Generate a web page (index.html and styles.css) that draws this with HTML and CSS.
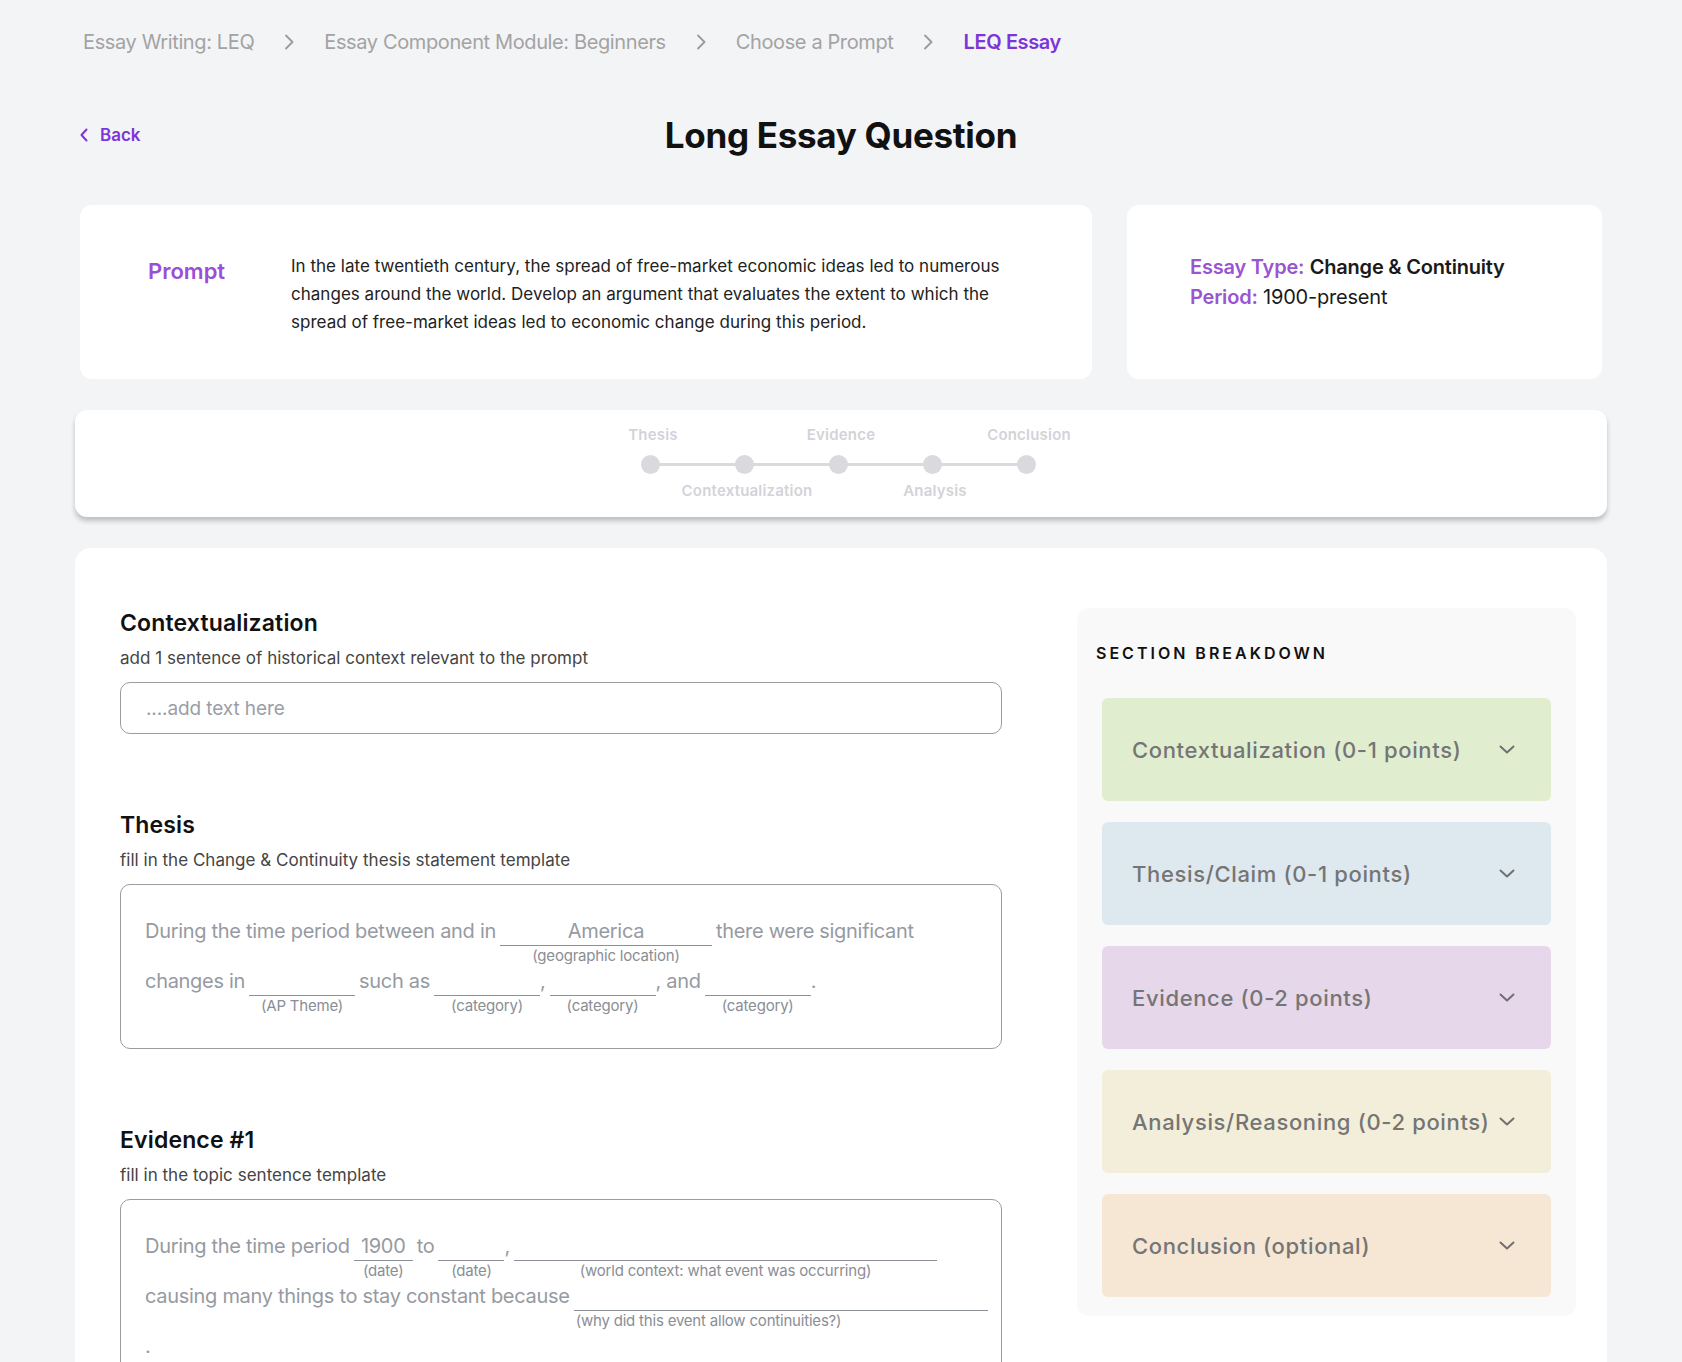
FILE: index.html
```html
<!DOCTYPE html>
<html lang="en">
<head>
<meta charset="utf-8">
<title>LEQ Essay</title>
<link rel="stylesheet" href="styles.css">
</head>
<body>
<nav class="crumbs">
  <span class="crumb">Essay Writing: LEQ</span>
  <svg class="crumb-sep" viewBox="0 0 10 16" width="10" height="16"><path d="M2 1.5 L8.5 8 L2 14.5" fill="none" stroke="#9a9a9a" stroke-width="1.8" stroke-linecap="round" stroke-linejoin="round"/></svg>
  <span class="crumb">Essay Component Module: Beginners</span>
  <svg class="crumb-sep" viewBox="0 0 10 16" width="10" height="16"><path d="M2 1.5 L8.5 8 L2 14.5" fill="none" stroke="#9a9a9a" stroke-width="1.8" stroke-linecap="round" stroke-linejoin="round"/></svg>
  <span class="crumb">Choose a Prompt</span>
  <svg class="crumb-sep" viewBox="0 0 10 16" width="10" height="16"><path d="M2 1.5 L8.5 8 L2 14.5" fill="none" stroke="#9a9a9a" stroke-width="1.8" stroke-linecap="round" stroke-linejoin="round"/></svg>
  <span class="crumb current">LEQ Essay</span>
</nav>

<header class="title-row">
  <a class="back" href="#">
    <svg viewBox="0 0 8 14" width="8" height="14"><path d="M6.5 1.5 L1.5 7 L6.5 12.5" fill="none" stroke="#7d35d9" stroke-width="2" stroke-linecap="round" stroke-linejoin="round"/></svg>
    <span>Back</span>
  </a>
  <h1 class="title">Long Essay Question</h1>
  <div></div>
</header>

<section class="cards">
  <div class="card prompt-card">
    <div class="prompt-label">Prompt</div>
    <p class="prompt-text">In the late twentieth century, the spread of free-market economic ideas led to numerous changes around the world. Develop an argument that evaluates the extent to which the spread of free-market ideas led to economic change during this period.</p>
  </div>
  <div class="card info-card">
    <div class="info-line"><span class="info-key">Essay Type:</span> <span class="info-val strong">Change &amp; Continuity</span></div>
    <div class="info-line"><span class="info-key">Period:</span> <span class="info-val">1900-present</span></div>
  </div>
</section>

<section class="stepper-card">
  <div class="stepper">
    <div class="step"><span class="step-lbl">Thesis</span><span class="dot"></span><span class="step-lbl"></span></div>
    <div class="step"><span class="step-lbl"></span><span class="dot"></span><span class="step-lbl">Contextualization</span></div>
    <div class="step"><span class="step-lbl">Evidence</span><span class="dot"></span><span class="step-lbl"></span></div>
    <div class="step"><span class="step-lbl"></span><span class="dot"></span><span class="step-lbl">Analysis</span></div>
    <div class="step last"><span class="step-lbl">Conclusion</span><span class="dot"></span><span class="step-lbl"></span></div>
  </div>
</section>

<main class="main-card">
  <div class="left-col">
    <section class="block">
      <h2 class="block-title">Contextualization</h2>
      <p class="block-sub">add 1 sentence of historical context relevant to the prompt</p>
      <div class="text-input">....add text here</div>
    </section>

    <section class="block">
      <h2 class="block-title">Thesis</h2>
      <p class="block-sub">fill in the Change &amp; Continuity thesis statement template</p>
      <div class="template">
        <div class="t-line">
          <span class="t-word">During the time period between and in</span>
          <span class="blank w212"><span class="fill">America</span><span class="hint">(geographic location)</span></span>
          <span class="t-word">there were significant</span>
        </div>
        <div class="t-line">
          <span class="t-word">changes in</span>
          <span class="blank w106"><span class="fill"></span><span class="hint">(AP Theme)</span></span>
          <span class="t-word">such as</span>
          <span class="blank w106"><span class="fill"></span><span class="hint">(category)</span></span>
          <span class="t-word tight">,</span>
          <span class="blank w106"><span class="fill"></span><span class="hint">(category)</span></span>
          <span class="t-word tight">, and</span>
          <span class="blank w106"><span class="fill"></span><span class="hint">(category)</span></span>
          <span class="t-word tight">.</span>
        </div>
      </div>
    </section>

    <section class="block">
      <h2 class="block-title">Evidence #1</h2>
      <p class="block-sub">fill in the topic sentence template</p>
      <div class="template open">
        <div class="t-line">
          <span class="t-word">During the time period</span>
          <span class="blank w59"><span class="fill">1900</span><span class="hint">(date)</span></span>
          <span class="t-word">to</span>
          <span class="blank w66"><span class="fill"></span><span class="hint">(date)</span></span>
          <span class="t-word tight">,</span>
          <span class="blank w423"><span class="fill"></span><span class="hint">(world context: what event was occurring)</span></span>
        </div>
        <div class="t-line">
          <span class="t-word">causing many things to stay constant because</span>
          <span class="blank w414"><span class="fill"></span><span class="hint left">(why did this event allow continuities?)</span></span>
        </div>
        <div class="t-line">
          <span class="t-word">.</span>
        </div>
      </div>
    </section>
  </div>

  <aside class="breakdown">
    <h3 class="breakdown-title">SECTION BREAKDOWN</h3>
    <div class="acc green"><span>Contextualization (0-1 points)</span><svg class="chev" viewBox="0 0 16 9" width="16" height="9"><path d="M1.5 1.5 L8 7.5 L14.5 1.5" fill="none" stroke="#707070" stroke-width="2" stroke-linecap="round" stroke-linejoin="round"/></svg></div>
    <div class="acc blue"><span>Thesis/Claim (0-1 points)</span><svg class="chev" viewBox="0 0 16 9" width="16" height="9"><path d="M1.5 1.5 L8 7.5 L14.5 1.5" fill="none" stroke="#707070" stroke-width="2" stroke-linecap="round" stroke-linejoin="round"/></svg></div>
    <div class="acc purple"><span>Evidence (0-2 points)</span><svg class="chev" viewBox="0 0 16 9" width="16" height="9"><path d="M1.5 1.5 L8 7.5 L14.5 1.5" fill="none" stroke="#707070" stroke-width="2" stroke-linecap="round" stroke-linejoin="round"/></svg></div>
    <div class="acc yellow"><span>Analysis/Reasoning (0-2 points)</span><svg class="chev" viewBox="0 0 16 9" width="16" height="9"><path d="M1.5 1.5 L8 7.5 L14.5 1.5" fill="none" stroke="#707070" stroke-width="2" stroke-linecap="round" stroke-linejoin="round"/></svg></div>
    <div class="acc orange"><span>Conclusion (optional)</span><svg class="chev" viewBox="0 0 16 9" width="16" height="9"><path d="M1.5 1.5 L8 7.5 L14.5 1.5" fill="none" stroke="#707070" stroke-width="2" stroke-linecap="round" stroke-linejoin="round"/></svg></div>
  </aside>
</main>
</body>
</html>
```

FILE: styles.css
```css
* { box-sizing: border-box; }

html, body { height: 100%; }

body {
  margin: 0;
  padding: 0 80px;
  background: #f3f4f6;
  font-family: Inter, "Noto Sans", sans-serif;
  color: #111;
  overflow: hidden;
}

/* breadcrumb */
.crumbs {
  display: flex;
  align-items: center;
  padding-top: 28px;
  padding-left: 3px;
  height: 56px;
}
.crumb {
  font-size: 20px;
  line-height: 28px;
  color: #a3a3a3;
  letter-spacing: -0.38px;
}
.crumb.current {
  color: #7d35d9;
  font-weight: 600;
}
.crumb-sep {
  margin: 0 30px;
  flex: none;
}

/* title row */
.title-row {
  display: grid;
  grid-template-columns: 1fr auto 1fr;
  align-items: center;
  margin-top: 57px;
  height: 44px;
}
.back {
  display: flex;
  align-items: center;
  gap: 12px;
  margin-left: 0;
  text-decoration: none;
  color: #7d35d9;
  font-size: 17px;
  font-weight: 600;
}
.title {
  margin: 0;
  font-size: 35px;
  font-weight: 700;
  letter-spacing: -0.3px;
  color: #111;
}

/* top cards */
.cards {
  display: flex;
  gap: 35px;
  margin-top: 48px;
}
.card {
  background: #fff;
  border-radius: 12px;
  height: 174px;
}
.prompt-card {
  flex: 0 0 1012px;
  display: flex;
  align-items: center;
  padding: 4px 60px 0 68px;
}
.prompt-label {
  flex: 0 0 143px;
  align-self: center;
  margin-top: -47px;
  font-size: 22px;
  font-weight: 600;
  color: #9a4fd6;
}
.prompt-text {
  margin: 0;
  font-size: 17px;
  line-height: 28px;
  color: #222;
  letter-spacing: 0.02px;
}
.info-card {
  flex: 1;
  padding: 47px 0 0 63px;
}
.info-line {
  font-size: 20px;
  line-height: 30px;
  letter-spacing: -0.2px;
}
.info-key {
  color: #9a55d2;
  font-weight: 600;
}
.info-val { color: #1a1a1a; }
.info-val.strong { font-weight: 600; }

/* stepper */
.stepper-card {
  margin: 31px -5px 0;
  height: 107px;
  background: #fff;
  border-radius: 12px;
  box-shadow: 0 4px 5px rgba(0, 0, 0, 0.22);
  display: flex;
  justify-content: center;
  padding-top: 15px;
}
.stepper {
  display: flex;
  margin-left: -6px;
}
.step {
  position: relative;
  width: 94px;
  display: flex;
  flex-direction: column;
  align-items: center;
}
.step-lbl {
  display: flex;
  justify-content: center;
  width: 94px;
  height: 20px;
  line-height: 20px;
  padding-left: 6px;
  font-size: 15px;
  font-weight: 600;
  color: #d3d3d8;
  letter-spacing: 0.2px;
  white-space: nowrap;
}
.dot {
  width: 19px;
  height: 19px;
  border-radius: 50%;
  background: #dadade;
  margin: 10px 0 7px;
  position: relative;
  z-index: 1;
}
.step::after {
  content: "";
  position: absolute;
  left: 50%;
  width: 100%;
  top: 38px;
  height: 3px;
  background: #dadade;
}
.step.last::after { display: none; }

/* main card */
.main-card {
  margin: 31px -5px 0;
  background: #fff;
  border-radius: 16px 16px 0 0;
  display: flex;
  align-items: flex-start;
  gap: 75px;
  padding: 60px 31px 40px 45px;
  min-height: 900px;
}
.left-col {
  flex: 0 0 882px;
  width: 882px;
  min-width: 0;
}
.block + .block { margin-top: 76px; }
.block-title {
  margin: 0;
  font-size: 23px;
  line-height: 30px;
  font-weight: 600;
  letter-spacing: 0.15px;
  color: #111;
}
.block-sub {
  margin: 8px 0 0;
  font-size: 17px;
  line-height: 24px;
  color: #444;
  letter-spacing: 0.02px;
}
.text-input {
  margin-top: 12px;
  height: 52px;
  border: 1px solid #9c9c9c;
  border-radius: 10px;
  padding-left: 25px;
  display: flex;
  align-items: center;
  font-size: 19px;
  color: #9a9ea6;
  letter-spacing: -0.1px;
}
.template {
  margin-top: 12px;
  border: 1px solid #9c9c9c;
  border-radius: 10px;
  padding: 31px 8px 32px 24px;
  height: 165px;
  overflow: hidden;
}
.template.open {
  height: 200px;
  border-radius: 10px 10px 0 0;
}
.t-line {
  display: flex;
  align-items: flex-start;
  height: 50px;
  white-space: nowrap;
}
.t-word {
  font-size: 20px;
  line-height: 30px;
  color: #969aa2;
  letter-spacing: -0.3px;
  margin-right: 4px;
}
.t-word.tight { margin-left: -4px; }
.blank {
  display: flex;
  flex-direction: column;
  flex: none;
  margin-right: 4px;
}
.fill {
  height: 30px;
  line-height: 30px;
  border-bottom: 1px solid #8c9097;
  text-align: center;
  font-size: 20px;
  color: #969aa2;
  letter-spacing: -0.3px;
}
.hint {
  height: 20px;
  line-height: 20px;
  text-align: center;
  font-size: 15px;
  color: #8a8e95;
  letter-spacing: -0.2px;
  white-space: nowrap;
}
.hint.left { text-align: left; padding-left: 2px; }
.w59 { width: 59px; }
.w66 { width: 66px; }
.w106 { width: 106px; }
.w212 { width: 212px; }
.w414 { width: 414px; }
.w423 { width: 423px; }

/* breakdown panel */
.breakdown {
  flex: 0 0 499px;
  width: 499px;
  min-width: 0;
  background: #f9f9f9;
  border-radius: 12px;
  padding: 35px 25px 19px 25px;
}
.breakdown-title {
  margin: 0 0 35px -6px;
  font-size: 16px;
  line-height: 20px;
  font-weight: 600;
  letter-spacing: 3px;
  color: #111;
}
.acc {
  height: 103px;
  border-radius: 6px;
  display: flex;
  align-items: center;
  justify-content: space-between;
  padding: 0 36px 0 30px;
  font-size: 22px;
  font-weight: 500;
  color: #757575;
  letter-spacing: 0.65px;
  white-space: nowrap;
}
.acc + .acc { margin-top: 21px; }
.chev { flex: none; }
.green { background: #e0eecf; }
.blue { background: #dee8ef; }
.purple { background: #e6d7ea; }
.yellow { background: #f2eed9; }
.orange { background: #f6e6d4; }
```
